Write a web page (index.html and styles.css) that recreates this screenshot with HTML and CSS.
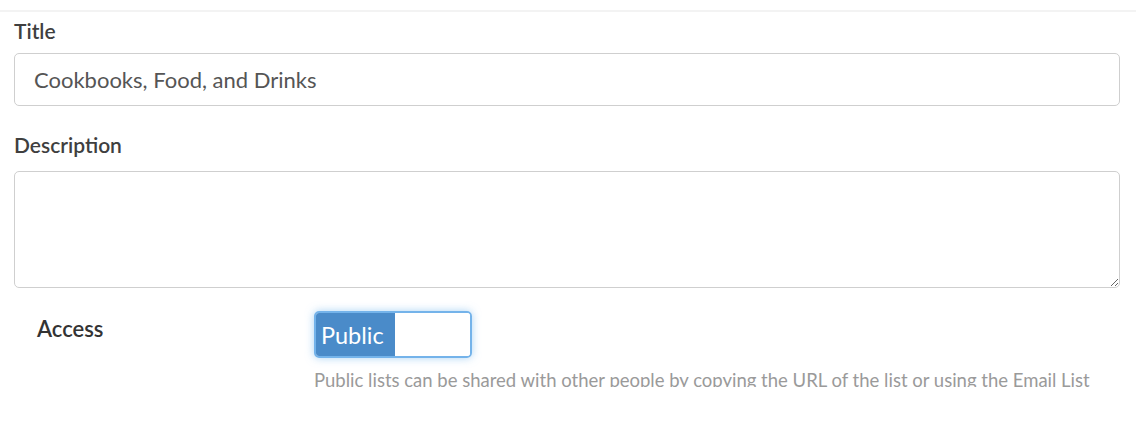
FILE: index.html
```html
<!DOCTYPE html>
<html lang="en">
<head>
<meta charset="utf-8">
<title>Edit list</title>
<link rel="stylesheet" href="styles.css">
</head>
<body>
<div class="strip"></div>
<form class="form">
  <div class="field">
    <label class="label" for="title">Title</label>
    <input class="input" id="title" type="text" value="Cookbooks, Food, and Drinks">
  </div>
  <div class="field field-desc">
    <label class="label" for="desc">Description</label>
    <textarea class="textarea" id="desc"></textarea>
  </div>
  <div class="access-row">
    <div class="access-label">Access</div>
    <div class="access-control">
      <div class="toggle">
        <span class="toggle-on">Public</span>
        <span class="toggle-off"></span>
      </div>
      <div class="help">Public lists can be shared with other people by copying the URL of the list or using the Email List</div>
    </div>
  </div>
</form>
</body>
</html>
```

FILE: styles.css
```css
* { box-sizing: border-box; }
html, body { background: #fff; }
body {
  margin: 0;
  font-family: Lato, "Open Sans", sans-serif;
  color: #333;
}
.strip {
  height: 12px;
  border-bottom: 2px solid #f3f3f3;
}
.form {
  padding: 0 16px 0 14px;
}
.field {
  display: flex;
  flex-direction: column;
}
.label {
  font-size: 21px;
  font-weight: 600;
  line-height: 26px;
  color: #3f3f3f;
  margin-top: 6px;
  margin-bottom: 9px;
}
.field-desc .label {
  margin-top: 26px;
  margin-bottom: 13px;
}
.input {
  height: 53px;
  border: 1px solid #cfcfcf;
  border-radius: 5px;
  padding: 0 19px;
  font-family: inherit;
  font-size: 22px;
  color: #555;
  outline: none;
}
.textarea {
  height: 117px;
  border: 1px solid #cfcfcf;
  border-radius: 5px;
  font-family: inherit;
  resize: vertical;
  outline: none;
}
.access-row {
  display: grid;
  grid-template-columns: 277px 1fr;
  padding-left: 23px;
  margin-top: 23px;
}
.access-label {
  font-size: 22px;
  font-weight: 600;
  color: #333;
  padding-top: 5px;
  line-height: 26px;
}
.access-control {
  display: flex;
  flex-direction: column;
  align-items: flex-start;
}
.toggle {
  display: flex;
  width: 158px;
  height: 47px;
  border: 2px solid #74b3ea;
  border-radius: 5px;
  overflow: hidden;
  box-shadow: 0 0 8px rgba(102, 175, 233, 0.55);
}
.toggle-on {
  width: 79px;
  padding-left: 5px;
  background: #4a8bc9;
  color: #fff;
  font-size: 23.5px;
  font-weight: 400;
  display: flex;
  align-items: center;
}
.toggle-off {
  flex: 1;
  background: #fff;
}
.help {
  margin-top: 11px;
  font-size: 18.5px;
  line-height: 22px;
  height: 18px;
  overflow: hidden;
  color: #9a9a9a;
  white-space: nowrap;
}
```
